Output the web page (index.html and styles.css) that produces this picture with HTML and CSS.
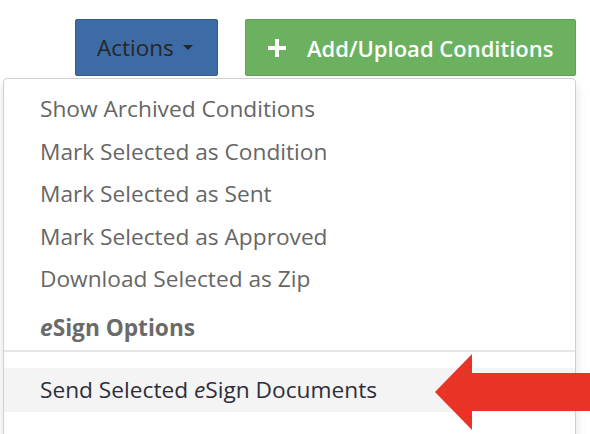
FILE: index.html
```html
<!DOCTYPE html>
<html lang="en">
<head>
  <meta charset="UTF-8" />
  <meta name="viewport" content="width=device-width, initial-scale=1" />
  <title>Conditions</title>
  <link rel="stylesheet" href="styles.css">
</head>
<body>

  <!-- Barra de botones -->
  <div class="toolbar">
    <button class="btn btn-actions">Actions <span class="caret"></span></button>
    <button class="btn btn-add">
      <svg class="plus" viewBox="0 0 18 18" width="18" height="18" aria-hidden="true">
        <rect x="7" y="0" width="4" height="18" fill="#fff" />
        <rect x="0" y="7" width="18" height="4" fill="#fff" />
      </svg>
      Add/Upload Conditions
    </button>
  </div>

  <!-- Menu desplegable -->
  <ul class="dropdown">
    <li class="item">Show Archived Conditions</li>
    <li class="item">Mark Selected as Condition</li>
    <li class="item">Mark Selected as Sent</li>
    <li class="item">Mark Selected as Approved</li>
    <li class="item">Download Selected as Zip</li>
    <li class="header"><i>e</i>Sign Options</li>
    <li class="divider"></li>
    <li class="item active">Send Selected <i>e</i>Sign Documents</li>
  </ul>

  <!-- Flecha roja -->
  <svg class="arrow" viewBox="0 0 155 76" width="155" height="76" aria-hidden="true">
    <polygon points="0,38 37,0 37,19 155,19 155,57 37,57 37,76" fill="#e83326" />
  </svg>

</body>
</html>
```

FILE: styles.css
```css
body {
  margin: 0;
  background: #fff;
  font-family: 'Open Sans', sans-serif;
  position: relative;
  height: 434px;
  overflow: hidden;
}

.toolbar {
  display: flex;
  justify-content: flex-end;
  gap: 27px;
  padding: 19px 14px 0 0;
}

.btn {
  height: 57px;
  display: flex;
  align-items: center;
  font-family: 'Open Sans', sans-serif;
  font-size: 22.5px;
  border-radius: 2px;
  cursor: pointer;
}

.btn-actions {
  width: 143px;
  padding: 0 0 0 21px;
  background: #3d6ba6;
  border: 1px solid #2f5b92;
  color: #262626;
}

.caret {
  display: inline-block;
  margin-left: 9px;
  border-top: 5px solid #262626;
  border-left: 5px solid transparent;
  border-right: 5px solid transparent;
}

.btn-add {
  width: 331px;
  padding: 0 0 0 22px;
  background: #6bb160;
  border: 1px solid #5ea153;
  color: #fff;
  font-size: 22px;
  font-weight: 600;
}

.plus {
  margin-right: 21px;
}

.dropdown {
  list-style: none;
  margin: 2px 0 0 3px;
  padding: 9px 0 0;
  width: 571px;
  height: 360px;
  background: #fff;
  border: 1px solid #cfcfcf;
  border-radius: 4px;
  box-shadow: 0 6px 12px rgba(0, 0, 0, 0.12);
}

.item,
.header {
  height: 42.5px;
  line-height: 42.5px;
  padding-left: 36px;
  font-size: 22.7px;
  color: #666;
  white-space: nowrap;
}

.header {
  margin-top: 6.5px;
  font-weight: 700;
  color: #6a6a6a;
}

.divider {
  height: 2px;
  background: #e6e6e6;
  margin-bottom: 16px;
}

.item.active {
  height: 44px;
  line-height: 44px;
  background: #f4f4f4;
  color: #2e2e3a;
}

.arrow {
  position: absolute;
  left: 435px;
  top: 354px;
}
```
